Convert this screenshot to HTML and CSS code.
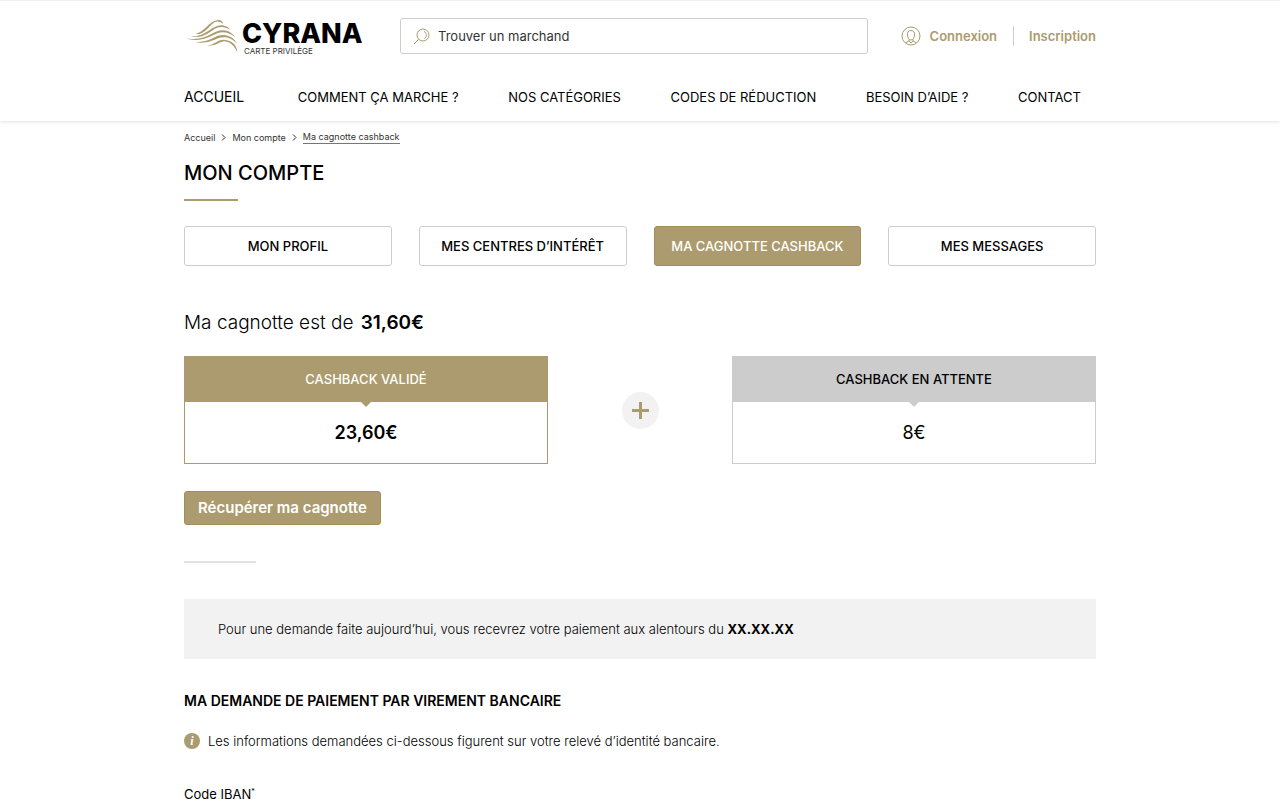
FILE: index.html
```html
<!DOCTYPE html>
<html lang="fr">
<head>
<meta charset="utf-8">
<meta name="viewport" content="width=device-width, initial-scale=1">
<title>Cyrana – Ma cagnotte cashback</title>
<link rel="stylesheet" href="styles.css">
</head>
<body>
<header class="site-header">
  <div class="container topbar">
    <a class="logo" href="#">
      <svg class="logo-mark" viewBox="40 60 162 102" aria-hidden="true">
        <path d="M74 105C104 99 112 66 144 63C151 63 158 69 156 74C148 67 138 65 129 71C110 86 100 108 74 105Z"/>
        <path d="M60 113C108 113 118 82 151 79C166 79 174 87 180 93C164 84 153 81 137 87C117 98 99 120 60 113Z"/>
        <path d="M42 117C109 130 121 94 158 94C177 95 187 106 194 115C176 100 159 97 141 102C116 114 86 132 42 117Z"/>
        <path d="M71 128C119 133 127 108 158 108C180 110 191 119 199 134C180 114 162 112 144 117C122 127 98 136 71 128Z"/>
        <path d="M109 139C132 138 138 122 160 122C184 124 199 138 200 160C190 138 176 127 160 127C142 130 134 143 109 139Z"/>
      </svg>
      <span class="logo-text"><span class="logo-name">CYRANA</span><span class="logo-tag">CARTE PRIVILÈGE</span></span>
    </a>
    <form class="search" role="search">
      <svg class="search-icon" viewBox="0 0 17 17" aria-hidden="true">
        <circle cx="10" cy="7" r="6"/><path d="M5.700 11.300L1 16M11 3.500C14 4.500 14 9 11.500 10.500"/>
      </svg>
      <input class="search-input" type="search" placeholder="Trouver un marchand" aria-label="Trouver un marchand">
    </form>
    <div class="account">
      <a class="account-link" href="#">
        <svg class="account-icon" viewBox="0 0 20 20" aria-hidden="true">
          <circle cx="10" cy="10" r="9"/>
          <path d="M10 4.500C7 4.500 6.200 6.500 6.500 9C6.800 12 8 14 10 14C12 14 13.200 12 13.500 9C13.800 6.500 13 4.500 10 4.500ZM8 13.300V15L4.500 16.800M12 13.300V15L15.500 16.800M8 15L10 17L12 15"/>
        </svg>Connexion</a>
      <a class="account-link account-signup" href="#">Inscription</a>
    </div>
  </div>
  <nav class="container nav">
    <a class="nav-home" href="#">ACCUEIL</a>
    <a href="#">COMMENT ÇA MARCHE ?</a>
    <a href="#">NOS CATÉGORIES</a>
    <a href="#">CODES DE RÉDUCTION</a>
    <a href="#">BESOIN D’AIDE ?</a>
    <a href="#">CONTACT</a>
  </nav>
</header>
<main class="container">
  <nav class="breadcrumb">
    <a href="#">Accueil</a>
    <svg viewBox="0 0 5 7" aria-hidden="true"><path d="M1 .5L4 3.500L1 6.500"/></svg>
    <a href="#">Mon compte</a>
    <svg viewBox="0 0 5 7" aria-hidden="true"><path d="M1 .5L4 3.500L1 6.500"/></svg>
    <a class="current" href="#">Ma cagnotte cashback</a>
  </nav>
  <h1 class="title">MON COMPTE</h1>
  <div class="tabs">
    <button class="tab" type="button">MON PROFIL</button>
    <button class="tab" type="button">MES CENTRES D’INTÉRÊT</button>
    <button class="tab active" type="button">MA CAGNOTTE CASHBACK</button>
    <button class="tab" type="button">MES MESSAGES</button>
  </div>
  <p class="balance">Ma cagnotte est de <strong>31,60€</strong></p>
  <div class="summary">
    <section class="card card-valid">
      <h2 class="card-head">CASHBACK VALIDÉ</h2>
      <p class="card-value">23,60€</p>
    </section>
    <svg class="plus" viewBox="0 0 37 37" role="img" aria-label="plus"><circle cx="18.500" cy="18.500" r="18.500"/><path d="M18.500 10V27M10 18.500H27"/></svg>
    <section class="card card-pending">
      <h2 class="card-head">CASHBACK EN ATTENTE</h2>
      <p class="card-value">8€</p>
    </section>
  </div>
  <button class="withdraw" type="button">Récupérer ma cagnotte</button>
  <hr class="divider">
  <p class="notice">Pour une demande faite aujourd’hui, vous recevrez votre paiement aux alentours du <strong>XX.XX.XX</strong></p>
  <h2 class="section-title">MA DEMANDE DE PAIEMENT PAR VIREMENT BANCAIRE</h2>
  <p class="info"><span class="info-icon" aria-hidden="true">i</span>Les informations demandées ci-dessous figurent sur votre relevé d’identité bancaire.</p>
  <p class="field-name">Code IBAN<sup>*</sup></p>
</main>
</body>
</html>
```
FILE: styles.css
```css
* { box-sizing: border-box; }
body {
  margin: 0;
  background: #fff;
  color: #000;
  font-family: Inter, "Open Sans", sans-serif;
  font-size: 13px;
  line-height: 20px;
}
h1, h2, p { margin: 0; }
a { color: inherit; text-decoration: none; }
button, input { font: inherit; }
button { cursor: pointer; }
.container { width: 100%; max-width: 912px; margin: 0 auto; }

.site-header {
  border-top: 1px solid #f0f0f0;
  box-shadow: 0 1px 3px rgba(0, 0, 0, .12);
}
.topbar { display: flex; align-items: center; padding-top: 16px; }
.logo { display: flex; align-items: center; gap: 4px; width: 216px; }
.logo-mark { width: 54px; height: 34px; fill: #ab9b6e; }
.logo-text { display: flex; flex-direction: column; padding-top: 4px; }
.logo-name { font-size: 27px; font-weight: 800; line-height: 26px; }
.logo-tag { font-size: 8px; line-height: 8px; padding-left: 2px; color: #333; }
.search {
  display: flex; align-items: center; gap: 8px; flex: 1;
  height: 36px; padding: 0 12px;
  border: 1px solid #ccc; border-radius: 3px;
}
.search-icon { width: 17px; height: 17px; fill: none; stroke: #ab9b6e; }
.search-input { flex: 1; border: 0; padding: 0; outline: 0; background: none; color: #333; font-size: 13px; }
.search-input::placeholder { color: #333; opacity: 1; }
.account { display: flex; align-items: center; margin-left: 33px; color: #ab9b6e; font-weight: 600; }
.account-link { display: flex; align-items: center; gap: 9px; }
.account-icon { width: 20px; height: 20px; fill: none; stroke: #ab9b6e; }
.account-signup { margin-left: 16px; padding-left: 15px; border-left: 1px solid #ccc; }
.nav { display: flex; justify-content: space-between; padding: 32px 15px 14px 0; }
.nav-home { margin-right: 4px; font-size: 14px; }

.breadcrumb { display: flex; align-items: center; gap: 6px; padding-top: 10px; font-size: 9px; line-height: 12px; color: #333; }
.breadcrumb svg { width: 5px; height: 7px; fill: none; stroke: #333; }
.current { border-bottom: 1px solid #777; }
.title { margin-top: 15px; font-size: 20px; line-height: 28px; font-weight: 500; }
.title::after { content: ""; display: block; width: 54px; height: 2px; margin-top: 12px; background: #ab9b6e; }
.tabs { display: grid; grid-template-columns: repeat(4, 1fr); gap: 27px; margin-top: 25px; }
.tab { height: 40px; padding: 0; background: #fff; color: #000; border: 1px solid #ccc; border-radius: 3px; font-weight: 500; }
.tab.active { background: #ab9b6e; border-color: #a38d58; color: #fff; }
.balance { margin-top: 43px; font-size: 19px; line-height: 28px; font-weight: 300; }
.balance strong { margin-left: 2px; font-weight: 600; }
.summary { display: grid; grid-template-columns: 2fr 1fr 2fr; column-gap: 1px; align-items: center; justify-items: center; margin-top: 19px; }
.card { width: 100%; height: 108px; border: 1px solid #ab9b6e; text-align: center; }
.card-head { position: relative; font-size: 13px; line-height: 45px; font-weight: 500; background: #ab9b6e; color: #fff; }
.card-head::after {
  content: ""; position: absolute; top: 100%; left: 50%; margin-left: -5px;
  border: 5px solid transparent; border-top-color: #ab9b6e; border-bottom: 0;
}
.card-value { padding-top: 17px; font-size: 18px; line-height: 28px; font-weight: 600; }
.card-pending { border-color: #ccc; }
.card-pending .card-head { background: #ccc; color: #000; }
.card-pending .card-head::after { border-top-color: #ccc; }
.card-pending .card-value { font-weight: 400; }
.plus { width: 37px; height: 37px; fill: #f2f2f2; stroke: none; }
.plus path { stroke: #ab9b6e; stroke-width: 3; }
.withdraw { display: block; height: 34px; margin-top: 27px; padding: 0 13px; background: #ab9b6e; border: 1px solid #a38d58; border-radius: 3px; color: #fff; font-size: 15px; font-weight: 600; }
.divider { width: 72px; height: 2px; margin: 36px 0 0; border: 0; background: #e2e2e2; }
.notice { margin-top: 36px; padding: 20px 34px; background: #f2f2f2; font-weight: 300; }
.notice strong { font-weight: 700; }
.section-title { margin-top: 32px; font-size: 14px; line-height: 20px; font-weight: 600; }
.info { display: flex; align-items: center; gap: 8px; margin-top: 20px; font-weight: 300; }
.info-icon { width: 16px; height: 16px; border-radius: 50%; background: #ab9b6e; color: #fff; font: italic bold 12px/16px "Liberation Serif", serif; text-align: center; }
.field-name { margin-top: 35px; line-height: 16px; }
.field-name sup { font-size: 7px; line-height: 0; vertical-align: 5px; }
```
